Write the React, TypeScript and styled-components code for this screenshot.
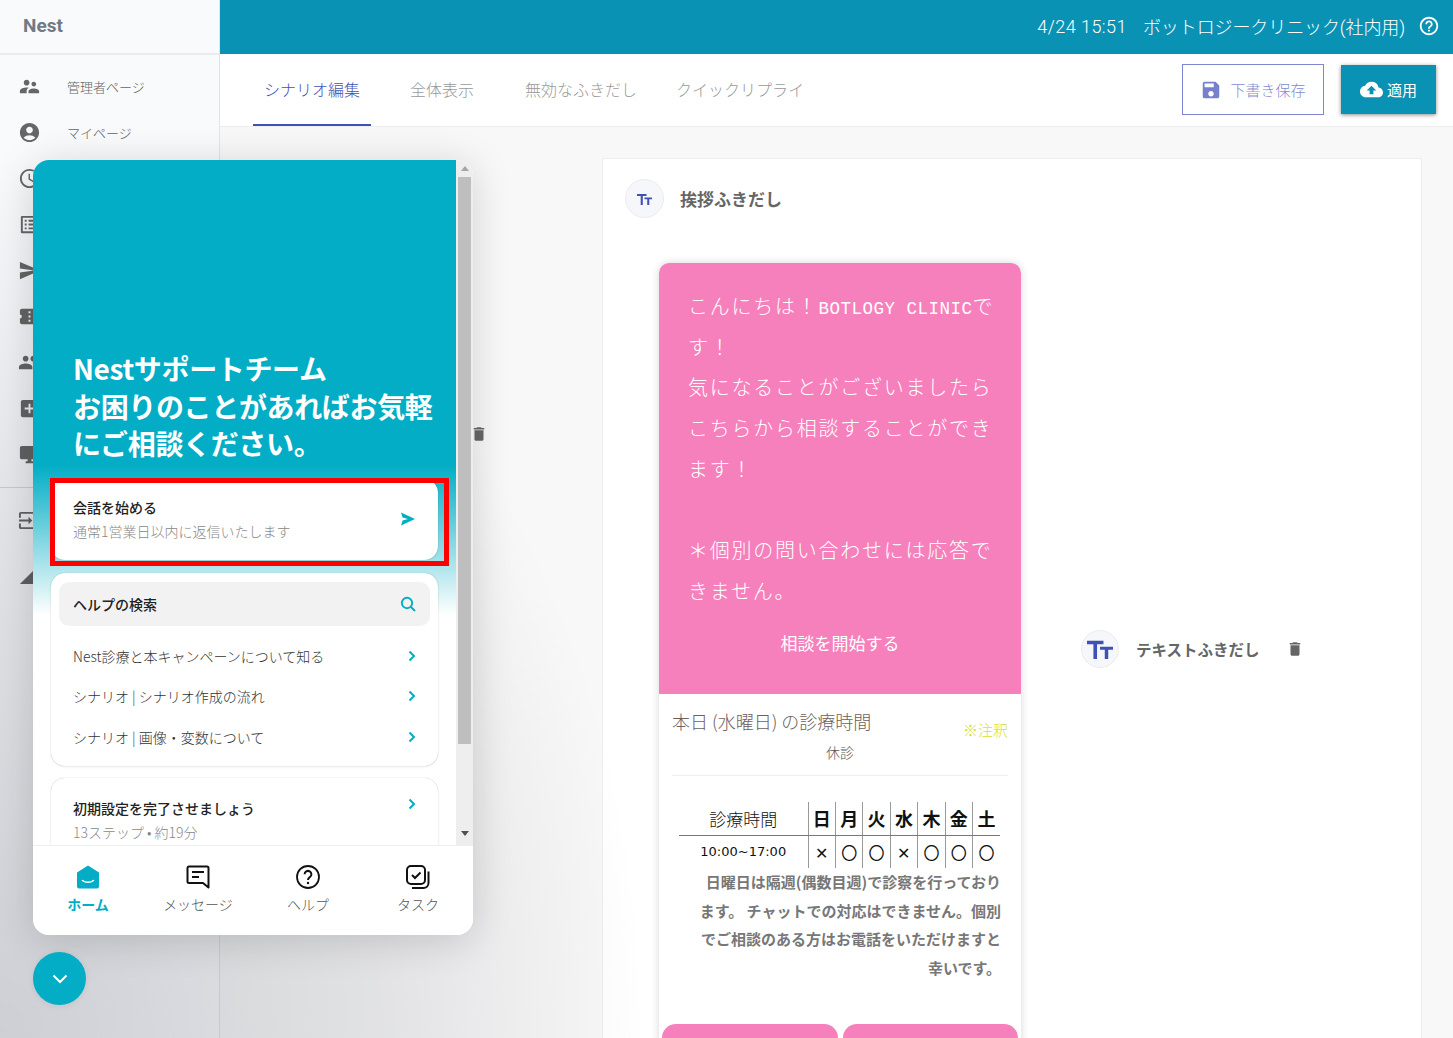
import React from "react";
import styled, { createGlobalStyle } from "styled-components";
import {
  MdSupervisorAccount, MdAccountCircle, MdAccessTime, MdOutlineListAlt, MdSend,
  MdConfirmationNumber, MdPeople, MdAddBox, MdDesktopWindows, MdInput, MdSignalCellular4Bar,
  MdSave, MdCloudUpload, MdHelpOutline, MdDelete,
} from "react-icons/md";

const JP = `"Noto Sans CJK JP", sans-serif`;
const TEAL = "#02adc5";
const BAR = "#0a92b5";
const PINK = "#f680bc";
const INDIGO = "#3f51b5";

const Global = createGlobalStyle`
  html, body { margin: 0; padding: 0; background: #fff; }
  body { font-family: "Roboto", ${JP}; overflow: hidden; }
  * { box-sizing: border-box; }
`;

const Page = styled.div`
  position: relative; width: 1453px; height: 1038px; overflow: hidden;
  display: grid; grid-template-columns: 220px 1fr;
`;
const Sidebar = styled.aside`
  background: #f9fafc; border-right: 1px solid #e4e4e6; display: flex; flex-direction: column;
`;
const Brand = styled.div`
  height: 55px; padding: 0 23px 3px; display: flex; align-items: center;
  font: 700 19px "Roboto", sans-serif; color: #707a85; border-bottom: 2px solid #ececee;
`;
const NavList = styled.nav`
  padding-top: 8px; display: flex; flex-direction: column;
  border-bottom: 1px solid #d9d9d9; padding-bottom: 10px;
`;
const NavRow = styled.div`
  height: 46px; display: flex; align-items: center; padding-left: 18px; gap: 26px;
  color: #666; font: 300 13px ${JP};
  svg { flex: none; }
  span { white-space: nowrap; }
`;
const LowerNav = styled.div`
  padding-top: 9px; display: flex; flex-direction: column; gap: 8px;
`;

const Main = styled.main`
  display: flex; flex-direction: column; min-width: 0; background: #f8f8f8;
`;
const TopBar = styled.header`
  height: 54px; background: ${BAR}; color: #fff; display: flex; align-items: center;
  justify-content: flex-end; padding: 0 13px 2px 0; font: 300 18px "Roboto", ${JP};
`;
const Clock = styled.span`margin-right: 16px; letter-spacing: .45px;`;
const Clinic = styled.span`margin-right: 13px; letter-spacing: -.1px;`;
const TabBar = styled.div`
  height: 73px; background: #fff; border-bottom: 1px solid #ececec;
  display: flex; align-items: center; justify-content: space-between; padding: 0 17px 0 33px;
`;
const Tabs = styled.div`display: flex; height: 100%;`;
const Tab = styled.div<{ $active?: boolean; $ml?: number }>`
  margin-left: ${p => p.$ml ?? 0}px; padding: 0 11px; display: flex; align-items: center;
  font: 300 16px ${JP}; color: ${p => (p.$active ? INDIGO : "#999")};
  border-bottom: 2px solid ${p => (p.$active ? INDIGO : "transparent")};
`;
const Actions = styled.div`display: flex; align-items: center; gap: 17px; margin-top: -1px;`;
const DraftButton = styled.div`
  width: 142px; height: 51px; border: 1px solid #7f86cf; display: flex; align-items: center;
  justify-content: center; gap: 8px; color: #7f8bd0; font: 300 15px ${JP};
`;
const ApplyButton = styled.div`
  width: 95px; height: 49px; background: ${BAR}; color: #fff; display: flex; align-items: center;
  justify-content: center; gap: 4px; font: 400 15px ${JP};
  box-shadow: 0 1px 4px rgba(0,0,0,.45);
`;

const Workspace = styled.div`
  flex: 1; display: flex; padding-top: 31px; min-height: 0;
`;
const Gutter = styled.div`
  width: 382px; flex: none; padding: 267px 0 0 250px; color: #666;
`;
const EditorCard = styled.section`
  width: 820px; flex: none; background: #fff; border: 1px solid #eee;
  padding: 20px 22px 0; display: flex; flex-direction: column; overflow: hidden;
`;
const CardHead = styled.div`display: flex; align-items: center; gap: 16px;`;
const TtBadge = styled.div<{ $large?: boolean }>`
  width: ${p => (p.$large ? 38 : 39)}px; height: ${p => (p.$large ? 38 : 39)}px; border-radius: 50%;
  background: #f6f7fa; border: 1px solid #ececf0; display: flex; align-items: center; justify-content: center;
  flex: none;
`;
const CardTitle = styled.h2`margin: 0; font: 700 17px ${JP}; color: #666;`;
const BubbleRow = styled.div`display: flex; margin-top: 45px; padding-left: 34px; align-items: flex-start;`;
const Phone = styled.div`
  width: 362px; flex: none; border-radius: 10px 10px 0 0; background: #fff;
  box-shadow: 0 0 8px rgba(0,0,0,.16);
`;
const PinkPanel = styled.div`
  height: 431px; background: ${PINK}; border-radius: 10px 10px 0 0; color: #fff;
  padding: 26px 20px 0 29px; display: flex; flex-direction: column;
`;
const Greeting = styled.p`
  margin: 0; font: 300 20px/40.7px "Liberation Mono", ${JP}; letter-spacing: 1.75px; white-space: nowrap;
`;
const Latin = styled.span`font-size: 17.5px; letter-spacing: .5px;`;
const PinkAction = styled.div`
  margin-top: 8px; text-align: center; font: 400 17px/40px ${JP}; padding-right: 9px;
`;
const Hours = styled.div`padding: 15px 13px 0;`;
const HoursHead = styled.div`display: flex; justify-content: space-between; align-items: flex-end;`;
const HoursTitle = styled.div`font: 300 18px/24px ${JP}; color: #6d6060;`;
const Note = styled.div`font: 300 15px/20px ${JP}; color: #d6df3a; margin-bottom: -7px;`;
const Closed = styled.div`
  text-align: center; font: 300 14px/20px ${JP}; color: #555; margin-top: 9px; padding-bottom: 13px;
  border-bottom: 1px solid #eee;
`;
const Schedule = styled.table`
  border-collapse: collapse; width: 321px; margin: 26px 0 0 7px; table-layout: fixed;
`;
const Th = styled.th<{ $first?: boolean }>`
  height: 33px; padding: 0; color: #111; text-align: center;
  font: ${p => (p.$first ? "300 17px" : "700 18px")} ${JP};
  border-left: ${p => (p.$first ? "0" : "1px solid #999")};
  border-bottom: 1px solid #777;
  width: ${p => (p.$first ? "129px" : "auto")};
`;
const Td = styled.td<{ $first?: boolean }>`
  height: 33px; padding: 0; color: #111; text-align: center;
  font: ${p => (p.$first ? `400 13px "DejaVu Sans"` : `400 16px ${JP}`)};
  border-left: ${p => (p.$first ? "0" : "1px solid #999")};
`;
const BoldNote = styled.p`
  margin: 0 7px 0 0; text-align: right; font: 700 15px/28.6px ${JP}; color: #777; white-space: nowrap;
`;
const PinkButtons = styled.div`display: flex; gap: 5px; margin: 42px 3px 0;`;
const PinkButton = styled.div`flex: 1; height: 40px; background: ${PINK}; border-radius: 14px 14px 0 0;`;
const SideItem = styled.div`
  margin: 367px 0 0 60px; display: flex; align-items: center; color: #666;
`;
const SideLabel = styled.span`margin: 0 26px 0 17px; font: 700 15.5px ${JP}; color: #666;`;

const Veil = styled.div`
  position: absolute; left: 0; bottom: 0; width: 760px; height: 1038px; pointer-events: none;
  background: radial-gradient(ellipse 100% 100% at 0% 100%, rgba(29,35,53,.2) 0%, rgba(29,35,53,.1) 50%, rgba(29,35,53,0) 85%);
`;
const Widget = styled.div`
  position: absolute; left: 33px; top: 160px; width: 440px; height: 775px; border-radius: 16px;
  overflow: hidden; background: #fff; display: flex; flex-direction: column;
  box-shadow: 0 5px 40px rgba(0,0,0,.16); font-feature-settings: "palt";
`;
const ScrollFrame = styled.div`flex: 1; min-height: 0; display: flex; background: #fff;`;
const ScrollContent = styled.div`
  width: 423px; flex: none; overflow: hidden; padding: 190px 18px 0;
  background: linear-gradient(${TEAL} 0, ${TEAL} 305px, #fff 455px);
`;
const Heading = styled.h1`
  margin: 0 0 16px 22px; color: #fff; font: 700 28px/37.5px ${JP}; letter-spacing: -.35px; white-space: nowrap;
`;
const StartWrap = styled.div`position: relative;`;
const RedFrame = styled.div`
  position: absolute; left: -1px; right: -11px; top: -1px; bottom: -6px; border: 5px solid #f00; pointer-events: none;
`;
const WidgetCard = styled.div`
  background: #fff; border-radius: 14px; box-shadow: 0 0 1px rgba(0,0,0,.3), 0 1px 3px rgba(0,0,0,.07);
`;
const StartCard = styled(WidgetCard)`
  height: 81px; padding: 18px 22px 0; display: flex; justify-content: space-between; align-items: center;
  padding-top: 0;
`;
const CardText = styled.div`display: flex; flex-direction: column; gap: 4px;`;
const CardStrong = styled.div`font: 500 14px/20px ${JP}; color: #222;`;
const CardMuted = styled.div`font: 300 14px/20px ${JP}; color: #888;`;
const HelpCard = styled(WidgetCard)`margin-top: 13px; padding: 9px 8px; height: 193px;`;
const SearchBox = styled.div`
  height: 44px; border-radius: 10px; background: #f2f2f2; display: flex; align-items: center;
  justify-content: space-between; padding: 0 14px; margin-bottom: 10px;
`;
const HelpRow = styled.div`
  height: 40.5px; padding: 0 14px; display: flex; justify-content: space-between; align-items: center;
  font: 300 14px/20px ${JP}; color: #333;
`;
const SetupCard = styled(WidgetCard)`
  margin-top: 12px; height: 100px; padding: 20px 22px; display: flex; justify-content: space-between;
  align-items: flex-start;
`;
const Scrollbar = styled.div`
  width: 17px; flex: none; background: #eee; display: flex; flex-direction: column; align-items: center;
  padding-top: 6px;
`;
const ArrowUp = styled.div`
  width: 0; height: 0; border: 4px solid transparent; border-top: 0; border-bottom: 5px solid #a5a5a5;
`;
const ArrowDown = styled.div`
  width: 0; height: 0; border: 4px solid transparent; border-bottom: 0; border-top: 5px solid #505050; margin-top: 87px;
`;
const Thumb = styled.div`width: 13px; height: 567px; background: #bebebe; margin-top: 6px;`;
const BottomNav = styled.nav`
  height: 90px; flex: none; border-top: 1px solid #eee; display: grid; grid-template-columns: repeat(4, 110px);
  background: #fff;
`;
const NavItem = styled.div<{ $active?: boolean }>`
  display: flex; flex-direction: column; align-items: center; padding-top: 19px; gap: 5px;
  color: ${p => (p.$active ? TEAL : "#555")};
  font: ${p => (p.$active ? 700 : 300)} 14px/20px ${JP};
`;
const Launcher = styled.div`
  position: absolute; left: 33px; top: 952px; width: 53px; height: 53px; border-radius: 50%; background: ${TEAL};
  display: flex; align-items: center; justify-content: center; box-shadow: 0 1px 6px rgba(0,0,0,.08);
`;

const Tt = ({ size }: { size: number }) => (
  <svg width={size} height={size * 0.8} viewBox="0 0 30 24" fill={INDIGO}>
    <path d="M0 2h19v4h-7.4v18H7.4V6H0z" />
    <path d="M15 9h15v3.4h-5.5V24h-4V12.4H15z" />
  </svg>
);
const Chevron = () => (
  <svg width="8" height="12" viewBox="0 0 8 12" fill="none" stroke={TEAL} strokeWidth="2">
    <path d="M1.5 1.5 6 6l-4.5 4.5" />
  </svg>
);
const SendGlyph = () => (
  <svg width="16" height="16" viewBox="0 0 16 16" fill={TEAL}>
    <path d="M1 1.5 15 8 1 14.5l1.6-5L8 8 2.6 6.5z" />
  </svg>
);
const SearchGlyph = () => (
  <svg width="16" height="16" viewBox="0 0 16 16" fill="none" stroke={TEAL} strokeWidth="1.9">
    <circle cx="7" cy="7" r="5.2" />
    <path d="m11 11 4 4" />
  </svg>
);
const HomeGlyph = () => (
  <svg width="24" height="24" viewBox="0 0 24 24">
    <path fill={TEAL} d="M12 0.5 23 7.5V21.5a2 2 0 0 1-2 2H3a2 2 0 0 1-2-2V7.5z" />
    <path d="M6.5 15.5c3 2.4 8 2.4 11 0" fill="none" stroke="#fff" strokeWidth="1.6" strokeLinecap="round" />
  </svg>
);
const MessageGlyph = () => (
  <svg width="24" height="24" viewBox="0 0 24 24" fill="none" stroke="#111" strokeWidth="2">
    <path d="M3 1.5h18a1.5 1.5 0 0 1 1.5 1.5v19.5L17 18H3a1.5 1.5 0 0 1-1.5-1.5V3A1.5 1.5 0 0 1 3 1.5z" strokeLinejoin="round" />
    <path d="M6 7h12M6 12h7" />
  </svg>
);
const HelpGlyph = () => (
  <svg width="24" height="24" viewBox="0 0 24 24" fill="none" stroke="#111" strokeWidth="1.8">
    <circle cx="12" cy="12" r="11" />
    <path d="M8.6 9.3a3.4 3.4 0 1 1 5.2 2.9c-1.2.8-1.8 1.4-1.8 2.8" strokeWidth="2" />
    <circle cx="12" cy="18" r="1.2" fill="#111" stroke="none" />
  </svg>
);
const TaskGlyph = () => (
  <svg width="24" height="24" viewBox="0 0 24 24" fill="none" stroke="#111" strokeWidth="2">
    <rect x="1" y="1" width="18" height="18" rx="4" />
    <path d="M6 10l3 3 5.5-5.5" />
    <path d="M22.5 6.5V18a5 5 0 0 1-5 5H6" />
  </svg>
);

const hiddenIcons = [MdAccessTime, MdOutlineListAlt, MdSend, MdConfirmationNumber, MdPeople, MdAddBox, MdDesktopWindows];
const days = ["日", "月", "火", "水", "木", "金", "土"];
const marks = ["✕", "〇", "〇", "✕", "〇", "〇", "〇"];
const helpRows = ["Nest診療と本キャンペーンについて知る", "シナリオ | シナリオ作成の流れ", "シナリオ | 画像・変数について"];

export default function App() {
  return (
    <Page>
      <Global />
      <Sidebar>
        <Brand>Nest</Brand>
        <NavList>
          <NavRow><MdSupervisorAccount size={23} /><span>管理者ページ</span></NavRow>
          <NavRow><MdAccountCircle size={23} /><span>マイページ</span></NavRow>
          {hiddenIcons.map((Icon, i) => <NavRow key={i}><Icon size={23} /></NavRow>)}
        </NavList>
        <LowerNav>
          <NavRow><MdInput size={23} /></NavRow>
          <NavRow><MdSignalCellular4Bar size={23} /></NavRow>
        </LowerNav>
      </Sidebar>
      <Main>
        <TopBar>
          <Clock>4/24 15:51</Clock>
          <Clinic>ボットロジークリニック(社内用)</Clinic>
          <MdHelpOutline size={22} />
        </TopBar>
        <TabBar>
          <Tabs>
            <Tab $active>シナリオ編集</Tab>
            <Tab $ml={28}>全体表示</Tab>
            <Tab $ml={29}>無効なふきだし</Tab>
            <Tab $ml={17}>クイックリプライ</Tab>
          </Tabs>
          <Actions>
            <DraftButton><MdSave size={22} color="#7680cc" />下書き保存</DraftButton>
            <ApplyButton><MdCloudUpload size={23} />適用</ApplyButton>
          </Actions>
        </TabBar>
        <Workspace>
          <Gutter><MdDelete size={18} /></Gutter>
          <EditorCard>
            <CardHead>
              <TtBadge><Tt size={15} /></TtBadge>
              <CardTitle>挨拶ふきだし</CardTitle>
            </CardHead>
            <BubbleRow>
              <Phone>
                <PinkPanel>
                  <Greeting>
                    こんにちは！<Latin>BOTLOGY CLINIC</Latin>で<br />
                    す！<br />
                    気になることがございましたら<br />
                    こちらから相談することができ<br />
                    ます！<br />
                    <br />
                    ＊個別の問い合わせには応答で<br />
                    きません。
                  </Greeting>
                  <PinkAction>相談を開始する</PinkAction>
                </PinkPanel>
                <Hours>
                  <HoursHead>
                    <HoursTitle>本日 (水曜日) の診療時間</HoursTitle>
                    <Note>※注釈</Note>
                  </HoursHead>
                  <Closed>休診</Closed>
                  <Schedule>
                    <thead>
                      <tr>
                        <Th $first>診療時間</Th>
                        {days.map(d => <Th key={d}>{d}</Th>)}
                      </tr>
                    </thead>
                    <tbody>
                      <tr>
                        <Td $first>10:00~17:00</Td>
                        {marks.map((m, i) => <Td key={i}>{m}</Td>)}
                      </tr>
                    </tbody>
                  </Schedule>
                  <BoldNote>
                    日曜日は隔週(偶数目週)で診察を行っており<br />
                    ます。 チャットでの対応はできません。個別<br />
                    でご相談のある方はお電話をいただけますと<br />
                    幸いです。
                  </BoldNote>
                </Hours>
                <PinkButtons><PinkButton /><PinkButton /></PinkButtons>
              </Phone>
              <SideItem>
                <TtBadge $large><Tt size={26} /></TtBadge>
                <SideLabel>テキストふきだし</SideLabel>
                <MdDelete size={18} />
              </SideItem>
            </BubbleRow>
          </EditorCard>
        </Workspace>
      </Main>

      <Veil />
      <Widget>
        <ScrollFrame>
          <ScrollContent>
            <Heading>Nestサポートチーム<br />お困りのことがあればお気軽<br />にご相談ください。</Heading>
            <StartWrap>
              <StartCard>
                <CardText>
                  <CardStrong>会話を始める</CardStrong>
                  <CardMuted>通常1営業日以内に返信いたします</CardMuted>
                </CardText>
                <SendGlyph />
              </StartCard>
              <RedFrame />
            </StartWrap>
            <HelpCard>
              <SearchBox><CardStrong>ヘルプの検索</CardStrong><SearchGlyph /></SearchBox>
              {helpRows.map(r => <HelpRow key={r}>{r}<Chevron /></HelpRow>)}
            </HelpCard>
            <SetupCard>
              <CardText>
                <CardStrong>初期設定を完了させましょう</CardStrong>
                <CardMuted>13ステップ • 約19分</CardMuted>
              </CardText>
              <Chevron />
            </SetupCard>
          </ScrollContent>
          <Scrollbar>
            <ArrowUp />
            <Thumb />
            <ArrowDown />
          </Scrollbar>
        </ScrollFrame>
        <BottomNav>
          <NavItem $active><HomeGlyph />ホーム</NavItem>
          <NavItem><MessageGlyph />メッセージ</NavItem>
          <NavItem><HelpGlyph />ヘルプ</NavItem>
          <NavItem><TaskGlyph />タスク</NavItem>
        </BottomNav>
      </Widget>
      <Launcher>
        <svg width="16" height="10" viewBox="0 0 16 10" fill="none" stroke="#fff" strokeWidth="2">
          <path d="M1.5 1.5 8 8l6.5-6.5" />
        </svg>
      </Launcher>
    </Page>
  );
}
